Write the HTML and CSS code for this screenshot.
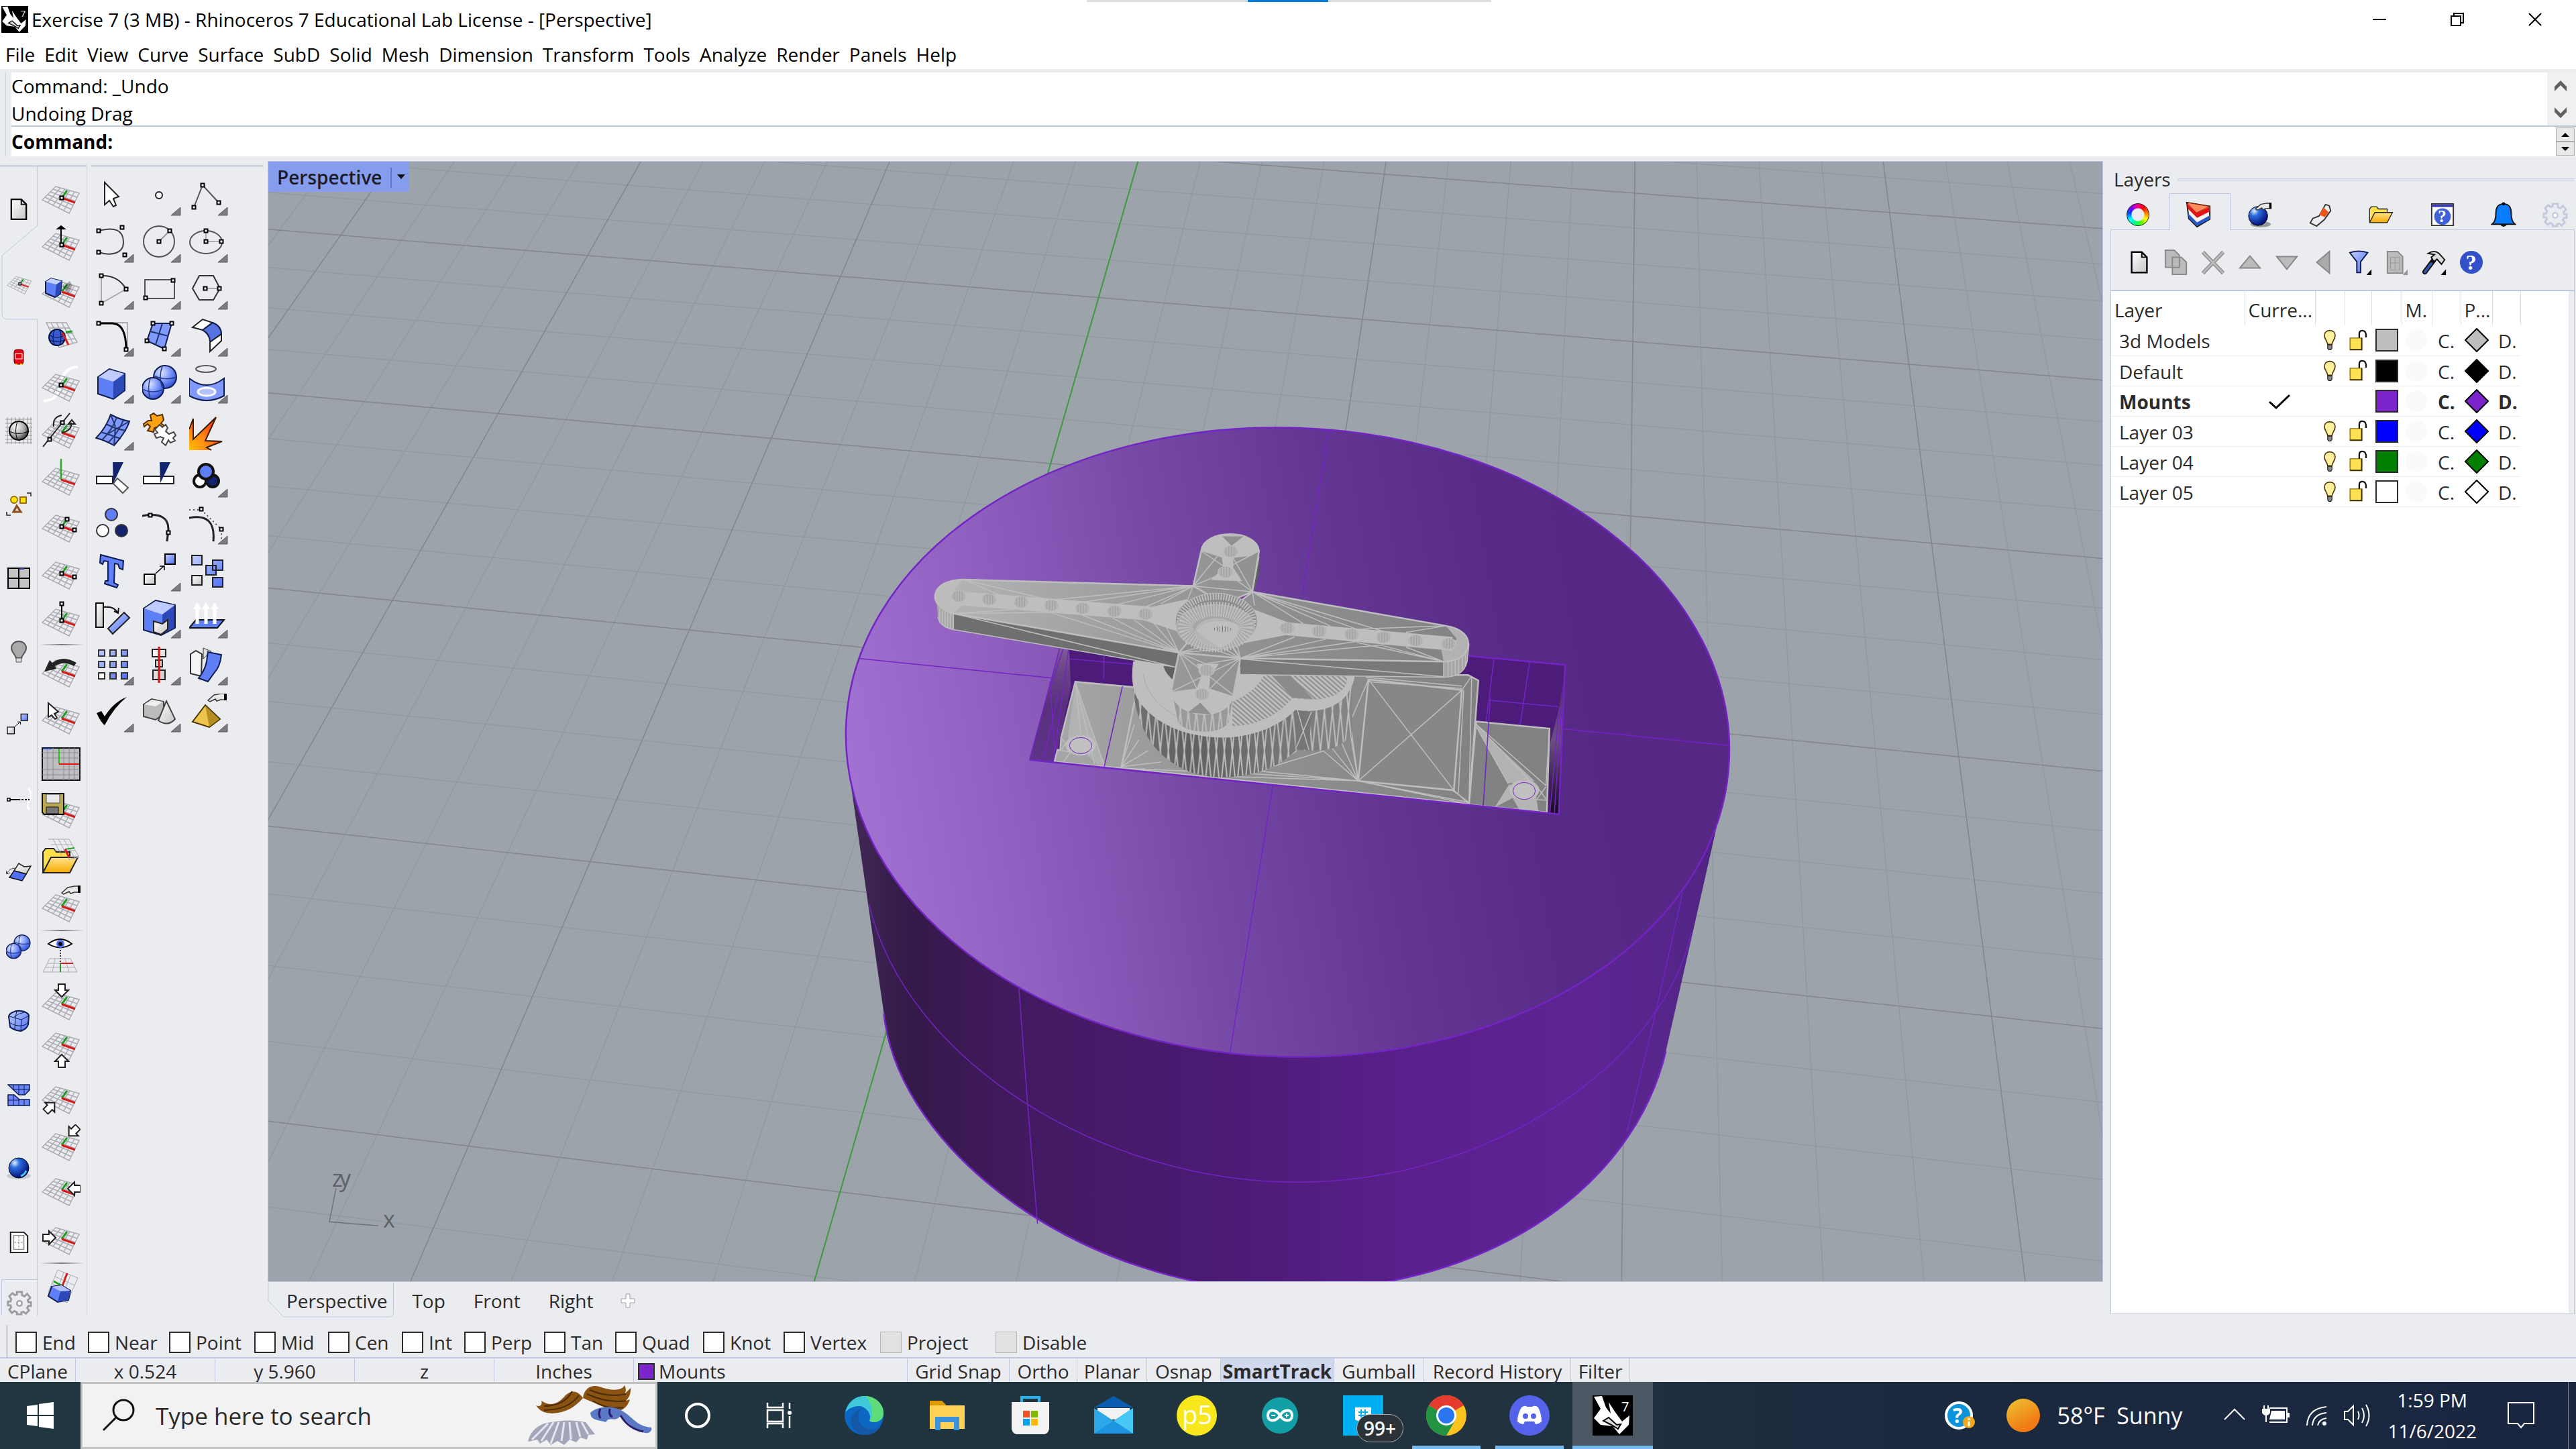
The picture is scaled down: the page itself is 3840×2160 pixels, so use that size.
FILE: index.html
```
<!DOCTYPE html>
<html lang="en">
<head>
<meta charset="UTF-8">
<meta name="viewport" content="width=device-width, initial-scale=1">
<title>Exercise 7 (3 MB) - Rhinoceros 7 Educational Lab License - [Perspective]</title>
<link rel="stylesheet" href="styles.css">
</head>
<body>

<!-- shared gradients and symbols -->
<svg class="defs" width="0" height="0" aria-hidden="true">
  <defs>
    <linearGradient id="blue" x1="0" y1="0" x2="1" y2="1"><stop offset="0" stop-color="#c3cfff"/><stop offset="1" stop-color="#4f70f2"/></linearGradient>
    <linearGradient id="grey" x1="0" y1="0" x2="1" y2="1"><stop offset="0" stop-color="#fff"/><stop offset="1" stop-color="#c4c4c4"/></linearGradient>
    <linearGradient id="gold" x1="0" y1="0" x2="0" y2="1"><stop offset="0" stop-color="#ffe58c"/><stop offset="1" stop-color="#f5a800"/></linearGradient>
    <radialGradient id="ball" cx=".35" cy=".3" r=".75"><stop offset="0" stop-color="#dfe6ff"/><stop offset=".5" stop-color="#7f9afc"/><stop offset="1" stop-color="#2a4bd0"/></radialGradient>
    <radialGradient id="greyball" cx=".35" cy=".3" r=".75"><stop offset="0" stop-color="#fff"/><stop offset=".6" stop-color="#aaa"/><stop offset="1" stop-color="#333"/></radialGradient>
    <radialGradient id="deepball" cx=".3" cy=".25" r=".8"><stop offset="0" stop-color="#e8f2ff"/><stop offset=".3" stop-color="#2d6fe0"/><stop offset="1" stop-color="#000a70"/></radialGradient>
    <radialGradient id="fire" cx="0" cy="1" r="1"><stop offset="0" stop-color="#ffc000"/><stop offset=".6" stop-color="#ff8418"/><stop offset="1" stop-color="#ff4a10"/></radialGradient>
  </defs>
  <symbol id="net" viewBox="0 0 58 58">
    <path d="M21 14 56 24 41 54 1 34ZM28 16 9 38M35 18 17 42M42 20 25 46M49 22 33 50M17 18 53 30M13 22 50 36M9 26 47 42M5 30 44 48" fill="none" stroke="#a9abb0" stroke-width="1.5"/>
  </symbol>
  <symbol id="cp" viewBox="0 0 58 58">
    <use href="#net"/>
    <path d="M30 31 38 20" stroke="#1f9e24" stroke-width="3"/><path d="M30 31 50 38" stroke="#d81a1a" stroke-width="3"/>
  </symbol>
  <symbol id="node" viewBox="0 0 8 8"><path d="M1.500 1.500h5v5h-5z" fill="#fff" stroke="#000" stroke-width="2"/></symbol>
  <symbol id="more" viewBox="0 0 58 58"><path d="M57 45V57H43Z" fill="#7b7c80" stroke="#5c5d60"/></symbol>
  <symbol id="hand" viewBox="0 0 30 14"><path d="M1 11 10 3 20 1H26V10H20L14 12 12 9 4 13Z" fill="#e8e8e8" stroke="#333" stroke-width="1.500"/><path d="M25 0h4v11h-4z"/></symbol>
  <symbol id="spheres" viewBox="0 0 58 58"><circle cx="34" cy="18" r="17" fill="url(#ball)" stroke="#101c50" stroke-width="2"/><circle cx="16" cy="35" r="16" fill="url(#ball)" stroke="#101c50" stroke-width="2"/><path d="M17 16q17 8 34 2M30 2q-6 16 0 32M0 36q16 8 32 0M12 20q-5 15 0 30" fill="none" stroke="#24388c" stroke-width="1.500"/></symbol>
  <symbol id="movesq" viewBox="0 0 58 58"><path d="M3 32h16v15H3z" fill="url(#grey)" stroke="#000" stroke-width="2"/><path d="M34 2h15v15H34z" fill="url(#blue)" stroke="#000" stroke-width="2"/><path d="M20 31 32 20M26 20h7v6" fill="none" stroke="#000" stroke-width="1.500"/></symbol>
  <symbol id="arrow" viewBox="0 0 24 22"><path d="M7 1H17V10H22L12 20 2 10H7Z" fill="#fff" stroke="#222" stroke-width="2"/></symbol>
  <symbol id="folder" viewBox="0 0 58 58"><path d="M2 50V20L6 15H18L22 20H42V28" fill="#ffe04a" stroke="#222" stroke-width="2"/><path d="M2 51 14 28H54L42 51Z" fill="url(#gold)" stroke="#222" stroke-width="2"/></symbol>
  <symbol id="page" viewBox="0 0 28 36"><path d="M2 2H18L26 10V34H2Z" fill="url(#grey)" stroke="#000" stroke-width="2.500"/><path d="M18 2V10H26" fill="none" stroke="#000" stroke-width="2"/></symbol>
  <symbol id="bulb" viewBox="0 0 24 40"><path d="M12 2C5 2 2 7 2 12c0 6 5 9 6 16h8c1-7 6-10 6-16C22 7 19 2 12 2Z" fill="#fff0a0" stroke="#4a3200" stroke-width="2"/><path d="M8 29h8v6l-2 3h-4l-2-3z" fill="#888" stroke="#222" stroke-width="1.500"/></symbol>
  <symbol id="lock" viewBox="0 0 32 36"><path d="M2 14H21V33H2Z" fill="#ffe254" stroke="#8a6f00" stroke-width="1.500"/><path d="M2 33H21V14" fill="none" stroke="#3f3200" stroke-width="2"/><path d="M17 14V7Q17 2 22 2T28 8V13" fill="none" stroke="#111" stroke-width="2.500"/></symbol>
  <symbol id="gear" viewBox="0 0 40 40"><path d="M16 3h8v5l4 2 4-4 5 6-4 4 1 3h4v6h-4l-2 3 3 4-5 5-4-3-3 1v3h-7v-3l-4-2-4 3-4-5 3-4-1-3H2v-6h4l1-4-3-4 5-5 4 3 3-1z" fill="none" stroke="currentColor" stroke-width="3"/><circle cx="20" cy="21" r="4" fill="#fff" stroke="currentColor" stroke-width="2.500"/></symbol>
  <symbol id="rhino" viewBox="0 0 60 60"><path d="M0 0h60v60H0z"/><path d="M2 2 14 1 20 18 27 27 24 10 33 24 44 39 55 30 54 44 40 58 30 46 12 44 2 34 12 20Z" fill="#fff"/><path d="M16 38 24 33 36 44 42 43 38 50 28 44Z" stroke="#000" stroke-width="2" fill="#ddd"/><text x="43" y="24" fill="#fff" font-size="20">7</text></symbol>
</svg>

<header class="titlebar">
  <svg class="app-icon"><use href="#rhino"/></svg>
  <h1>Exercise 7 (3 MB) - Rhinoceros 7 Educational Lab License - [Perspective]</h1>
  <div class="pull-tab"></div>
  <div class="window-buttons">
    <button aria-label="Minimize"><svg viewBox="0 0 20 20"><path d="M0 10H20"/></svg></button>
    <button aria-label="Restore"><svg viewBox="0 0 20 20"><path d="M1 5H15V19H1ZM5 5V1H19V15H15"/></svg></button>
    <button aria-label="Close"><svg viewBox="0 0 20 20"><path d="M1 1 19 19M19 1 1 19"/></svg></button>
  </div>
</header>

<nav class="menubar">
  <a href="#">File</a><a href="#">Edit</a><a href="#">View</a><a href="#">Curve</a><a href="#">Surface</a><a href="#">SubD</a><a href="#">Solid</a><a href="#">Mesh</a><a href="#">Dimension</a><a href="#">Transform</a><a href="#">Tools</a><a href="#">Analyze</a><a href="#">Render</a><a href="#">Panels</a><a href="#">Help</a>
</nav>

<section class="command">
  <div class="history">
    <div class="history-text"><p>Command: _Undo</p><p>Undoing Drag</p></div>
    <div class="scroll">
      <button aria-label="Scroll up"><svg viewBox="0 0 18 16"><path d="M0 16V9L9 0 18 9V16L9 7Z"/></svg></button>
      <button aria-label="Scroll down"><svg viewBox="0 0 18 16"><path d="M0 0V7L9 16 18 7V0L9 9Z"/></svg></button>
    </div>
  </div>
  <div class="prompt">
    <label for="cmd">Command:</label>
    <input id="cmd" type="text">
    <div class="spin">
      <button aria-label="Previous"><svg viewBox="0 0 12 6"><path d="M0 6 6 0 12 6Z"/></svg></button>
      <button aria-label="Next"><svg viewBox="0 0 12 6"><path d="M0 0 6 6 12 0Z"/></svg></button>
    </div>
  </div>
</section>

<main class="workspace">
  <div class="toolbars">
    <nav class="tool-tabs">
      <button aria-label="Standard"><svg class="i28" viewBox="0 0 28 36"><use href="#page"/></svg></button>
      <button class="current" aria-label="CPlanes"><svg class="outline" viewBox="0 0 54 141"><path d="M54 0 0 45V131Q0 141 10 141H54Z" fill="#ebecf0"/><path d="M53 0V1L1 45V131Q1 140 10 140H54" fill="none" stroke="#bfc7de"/></svg><svg class="i38" viewBox="0 0 58 58"><use href="#cp"/><use href="#node" x="26" y="27" width="8" height="8"/></svg></button>
      <button aria-label="Set View"><svg class="i24" viewBox="0 0 24 24"><rect x="5" y="1" width="14" height="22" rx="4" fill="#e30613" stroke="#700"/><path d="M7 7h10M7 15h10M7 7v8M17 7v8" stroke="#fff" fill="none"/><path d="M7 23h3M14 23h3" stroke="#fd0" stroke-width="2"/></svg></button>
      <button aria-label="Display"><svg class="i40" viewBox="0 0 40 40"><path d="M3 0V40M9 0V40M15 0V40M21 0V40M27 0V40M33 0V40M38 0V40M0 3H40M0 9H40M0 15H40M0 21H40M0 27H40M0 33H40M0 38H40" stroke="#999"/><circle cx="20" cy="20" r="14" fill="url(#greyball)" stroke="#000" stroke-width="2"/><path d="M6 21q14 7 28 0M18 6q-5 14 0 28" fill="none" stroke="#000"/></svg></button>
      <button aria-label="Select"><svg class="i38" viewBox="0 0 38 38"><circle cx="12" cy="12" r="5" fill="#ffe800" stroke="#a86a00" stroke-width="2"/><path d="M21 8h9v9h-9z" fill="#ffe800" stroke="#a86a00" stroke-width="2"/><path d="M16 21 22 30H11Z" fill="none" stroke="#8a4a1a" stroke-width="3"/><path d="M31 2h6v5M1 30v5h6" fill="none" stroke="#222" stroke-width="1.500"/></svg></button>
      <button aria-label="Viewport Layout"><svg class="i34" viewBox="0 0 34 32"><path d="M1 1H33V31H1ZM17 1V31M1 16H33" fill="#c4c4c4" stroke="#000" stroke-width="2"/><path d="M18 2h7" stroke="#1a3ab0" stroke-width="2"/></svg></button>
      <button aria-label="Visibility"><svg class="i34" viewBox="0 0 34 34"><path d="M17 1C10 1 6 6 6 11c0 7 6 9 7 15h8c1-6 7-8 7-15C28 6 24 1 17 1Z" fill="#aaa" stroke="#555" stroke-width="2"/><path d="M13 26h8v6h-8z" fill="#ddd" stroke="#555"/></svg></button>
      <button aria-label="Transform"><svg class="i38" viewBox="0 0 58 58"><use href="#movesq"/></svg></button>
      <button aria-label="Curve Tools"><svg class="i38" viewBox="0 0 38 38"><path d="M33 2q8 10 2 18t0 14" fill="none" stroke="#fff" stroke-width="3"/><path d="M6 19H18" stroke="#000" stroke-width="2"/><path d="M18 19H35" stroke="#000" stroke-width="2" stroke-dasharray="3 2"/><path d="M2 17h4v4H2z" fill="#fff" stroke="#000" stroke-width="1.500"/></svg></button>
      <button aria-label="Surface Tools"><svg class="i38" viewBox="0 0 38 38"><path d="M12 15 19 4 27 9 37 8 30 20Z" fill="url(#grey)" stroke="#222" stroke-width="1.500"/><path d="M12 15 30 20 24 30 5 25Z" fill="#4f70f2" stroke="#111" stroke-width="1.500"/><path d="M13 11Q4 12 1 20M0 15l1 5 5-2" fill="none" stroke="#333"/></svg></button>
      <button aria-label="Solid Tools"><svg class="i38" viewBox="0 0 54 54"><use href="#spheres" width="58" height="58"/></svg></button>
      <button aria-label="SubD Tools"><svg class="i34" viewBox="0 0 34 34"><path d="M8 4Q15 0 25 3 32 6 32 9L31 22Q29 29 20 32 10 31 4 26L2 10Q3 6 8 4Z" fill="url(#blue)" stroke="#0c1c50" stroke-width="2"/><path d="M3 10 21 15 32 9M21 15 20 31M12 12 11 30M3 19Q12 25 21 24T31 17M14 2 12 12M25 4Q16 6 10 11" fill="none" stroke="#0c1c50"/></svg></button>
      <button aria-label="Mesh Tools"><svg class="i34" viewBox="0 0 34 34"><path d="M1 2H33V10L26 17H17Z" fill="#6a86fa" stroke="#0c1c50" stroke-width="1.500"/><path d="M1 17H10L18 24H33V33H1Z" fill="#6a86fa" stroke="#0c1c50" stroke-width="1.500"/><path d="M9 2V9M17 2V17M25 2V17M8 9H33M9 17V33M17 24V33M25 24V33M1 25H18" stroke="#0c1c50"/></svg></button>
      <button aria-label="Render Tools"><svg class="i38" viewBox="0 0 38 38"><ellipse cx="19" cy="30" rx="18" ry="5" fill="#c9cad0"/><circle cx="19" cy="18" r="15" fill="url(#deepball)" stroke="#001"/><path d="M22 30q6-2 8-8" stroke="#46c2f4" stroke-width="3" fill="none"/></svg></button>
      <button aria-label="Drafting"><svg class="i34" viewBox="0 0 34 36"><path d="M4 2H25L31 8V34H4Z" fill="#fff" stroke="#111" stroke-width="2"/><path d="M9 7H25V29H9Z" fill="none" stroke="#888" stroke-width="1.500"/><path d="M17 8V29M10 18H25" stroke="#777" stroke-dasharray="3 2"/></svg></button>
      <button class="options" aria-label="Options"><svg class="i38" viewBox="0 0 40 40"><use href="#gear"/></svg></button>
    </nav>

    <div class="strip">
      <button aria-label="Set CPlane origin"><svg viewBox="0 0 58 58"><use href="#cp"/><use href="#node" x="26" y="27" width="8" height="8"/></svg></button>
      <button aria-label="Set CPlane elevation"><svg viewBox="0 0 58 58"><use href="#cp"/><path d="M29 29V6M24 7 29 3 34 7Z" stroke="#000" stroke-width="2"/><use href="#node" x="26" y="27" width="8" height="8"/></svg></button>
      <button aria-label="CPlane to object"><svg viewBox="0 0 58 58"><use href="#cp"/><path d="M32 24 42 15 46 22 40 34Z" opacity=".3"/><path d="M6 16 14 11 30 15 28 34 20 39 6 33Z" fill="#5f7ff7" stroke="#101c50" stroke-width="2"/><path d="M6 16 14 11 30 15 22 20Z" fill="#c3cfff"/><path d="M22 20 30 15 28 34 20 39Z" fill="#2d49b8"/></svg></button>
      <button aria-label="CPlane to surface"><svg viewBox="0 0 58 58"><path d="M7 7H37L53 36 26 44ZM14 7 33 42M22 7 40 40M30 7 47 38M10 15H42M14 24 46 23M19 33 50 31" fill="none" stroke="#a9abb0" stroke-width="1.500"/><circle cx="23" cy="29" r="12" fill="#3a5ad0" stroke="#001040" stroke-width="2"/><path d="M12 26q11 6 22 0M12 33q11 5 22 0M19 18q-4 11 0 22M27 18q4 11 0 22" fill="none" stroke="#001040"/><path d="M36 21 46 20" stroke="#1f9e24" stroke-width="3"/><path d="M31 22 40 40" stroke="#d81a1a" stroke-width="3"/></svg></button>
      <button aria-label="CPlane perpendicular to curve"><svg viewBox="0 0 58 58"><path d="M3 54Q26 52 29 28T54 3" fill="none" stroke="#fff" stroke-width="4"/><use href="#cp"/><use href="#node" x="25" y="26" width="8" height="8"/></svg></button>
      <button aria-label="Rotate CPlane"><svg viewBox="0 0 58 58"><use href="#cp"/><path d="M2 52 42 2M30 5Q16 8 18 22M44 16Q46 28 30 31M40 18 45 12 50 18Z" fill="none" stroke="#222" stroke-width="2"/><use href="#node" x="27" y="12" width="8" height="8"/><use href="#node" x="8" y="37" width="8" height="8"/></svg></button>
      <button aria-label="Vertical CPlane"><svg viewBox="0 0 58 58"><use href="#net"/><path d="M29 31V0" stroke="#2aa82a" stroke-width="2.500"/><path d="M29 31 50 38" stroke="#d81a1a" stroke-width="3"/></svg></button>
      <button aria-label="CPlane 3 points"><svg viewBox="0 0 58 58"><use href="#cp"/><use href="#node" x="26" y="27" width="8" height="8"/><use href="#node" x="34" y="16" width="8" height="8"/><use href="#node" x="45" y="32" width="8" height="8"/></svg></button>
      <button aria-label="CPlane X axis"><svg viewBox="0 0 58 58"><use href="#cp"/><use href="#node" x="26" y="27" width="8" height="8"/><use href="#node" x="45" y="32" width="8" height="8"/></svg></button>
      <button aria-label="CPlane Z axis"><svg viewBox="0 0 58 58"><use href="#cp"/><path d="M30 30V8" stroke="#000" stroke-width="2"/><use href="#node" x="26" y="27" width="8" height="8"/><use href="#node" x="26" y="2" width="8" height="8"/></svg></button>
      <hr>
      <button aria-label="Previous CPlane"><svg viewBox="0 0 58 58"><use href="#cp"/><path d="M4 31 12 14 16 18Q32 6 52 18L48 23Q34 14 20 23L22 27Z" fill="#222"/></svg></button>
      <button aria-label="Pick CPlane"><svg viewBox="0 0 58 58"><use href="#cp"/><path d="M10 8V29L15 26 20 32 23 30 19 24 25 21Z" fill="#fff" stroke="#222" stroke-width="2"/></svg></button>
      <button aria-label="CPlane in view"><svg viewBox="0 0 58 58"><path d="M1 5H57V53H1Z" fill="#bdbec0" stroke="#111" stroke-width="2"/><path d="M9 5V53M17 5V53M33 5V53M41 5V53M49 5V53M1 12H57M1 20H57M1 37H57M1 45H57" stroke="#8b8d90"/><path d="M2 6H15" stroke="#1a3ab0" stroke-width="2"/><path d="M26 6V29" stroke="#2ac410" stroke-width="2"/><path d="M26 29H56" stroke="#f01010" stroke-width="2"/></svg></button>
      <button aria-label="Save CPlane"><svg viewBox="0 0 58 58"><use href="#cp"/><path d="M1 3H33V34H4L1 31Z" fill="#b8a952" stroke="#111" stroke-width="2"/><path d="M7 4h20v13H7z" fill="#e9e9e9" stroke="#555"/><path d="M7 23h18v10H7z" fill="#777" stroke="#111"/></svg></button>
      <button aria-label="Read CPlane"><svg viewBox="0 0 58 58"><use href="#folder"/><path d="M10 1H41L56 28 40 31M17 1 30 25M25 1 42 32M33 1 50 30M14 9H46M19 18H50M38 27H55" fill="none" stroke="#a9abb0"/><path d="M35 16 49 14" stroke="#1f9e24" stroke-width="2"/><path d="M35 16 41 28" stroke="#d81a1a" stroke-width="3"/></svg></button>
      <button aria-label="Named CPlanes"><svg viewBox="0 0 58 58"><use href="#cp"/><use href="#hand" x="29" y="0" width="30" height="14"/></svg></button>
      <hr>
      <button aria-label="CPlane to view"><svg viewBox="0 0 58 58"><path d="M10 11Q28-3 45 11 28 22 10 11Z" fill="#fff" stroke="#000" stroke-width="2"/><circle cx="28" cy="11" r="6" fill="#4f70f2"/><circle cx="28" cy="11" r="3"/><path d="M28 20V40" stroke="#333" stroke-width="2" stroke-dasharray="2 2"/><path d="M12 33H43L53 53H2ZM9 40H47M6 46H50M20 33 16 53M35 33 41 53" fill="none" stroke="#a9abb0"/><path d="M28 40H47" stroke="#d81a1a" stroke-width="2"/><path d="M28 40V53" stroke="#1f9e24" stroke-width="2"/></svg></button>
      <button aria-label="World Top"><svg viewBox="0 0 58 58"><use href="#cp"/><use href="#arrow" x="18" y="0" width="24" height="22"/></svg></button>
      <button aria-label="World Bottom"><svg viewBox="0 0 58 58"><use href="#cp" y="-10"/><use href="#arrow" x="18" y="34" width="24" height="22" transform="rotate(180 30 45)"/></svg></button>
      <button aria-label="World Front"><svg viewBox="0 0 58 58"><use href="#cp"/><use href="#arrow" x="1" y="33" width="24" height="22" transform="rotate(225 13 44)"/></svg></button>
      <button aria-label="World Back"><svg viewBox="0 0 58 58"><use href="#cp"/><use href="#arrow" x="35" y="0" width="24" height="22" transform="rotate(45 47 11)"/></svg></button>
      <button aria-label="World Right"><svg viewBox="0 0 58 58"><use href="#cp" y="-3"/><use href="#arrow" x="36" y="15" width="24" height="22" transform="rotate(90 48 26)"/></svg></button>
      <button aria-label="World Left"><svg viewBox="0 0 58 58"><use href="#cp"/><use href="#arrow" x="0" y="18" width="24" height="22" transform="rotate(270 12 29)"/></svg></button>
      <hr>
      <button aria-label="Gumball CPlane"><svg viewBox="0 0 58 58"><path d="M24 1 54 13 38 50 10 34ZM33 5 20 40M43 9 29 45M20 11 49 24M15 21 44 37" fill="none" stroke="#a9abb0"/><path d="M31 25 38 6" stroke="#d81a1a" stroke-width="3"/><path d="M31 25 18 18" stroke="#1f9e24" stroke-width="3"/><path d="M15 26 30 24 43 32 40 46 24 49 10 40Z" fill="#5f7ff7" stroke="#101c50" stroke-width="2"/><path d="M28 33 43 32 40 46 24 49Z" fill="#2d49b8"/><path d="M15 26 30 24 43 32 28 33Z" fill="#b3c2ff"/></svg></button>
    </div>

    <div class="palette">
      <button aria-label="Pointer"><svg viewBox="0 0 58 58"><path d="M14 8V41L21 35 27 44 31 42 27 32 35 29Z" fill="#fff" stroke="#222" stroke-width="2"/></svg></button>
      <button aria-label="Point"><svg viewBox="0 0 58 58"><circle cx="25" cy="27" r="5" fill="#fff" stroke="#222" stroke-width="2"/><use href="#more"/></svg></button>
      <button aria-label="Polyline"><svg viewBox="0 0 58 58"><path d="M7 45 20 12 44 38" fill="none" stroke="#555" stroke-width="2"/><use href="#node" x="16" y="8" width="8" height="8"/><use href="#node" x="3" y="41" width="8" height="8"/><use href="#node" x="40" y="34" width="8" height="8"/><use href="#more"/></svg></button>

      <button aria-label="Curve"><svg viewBox="0 0 58 58"><path d="M5 10C28 4 42 8 42 27S20 47 5 42" fill="none" stroke="#444" stroke-width="2"/><use href="#more"/><use href="#node" x="1" y="6" width="8" height="8"/><use href="#node" x="36" y="1" width="8" height="8"/><use href="#node" x="1" y="38" width="8" height="8"/><use href="#node" x="40" y="42" width="8" height="8"/></svg></button>
      <button aria-label="Circle"><svg viewBox="0 0 58 58"><circle cx="25" cy="26" r="23" fill="none" stroke="#555" stroke-width="2"/><path d="M25 26 41 10" stroke="#999" stroke-width="2"/><use href="#node" x="21" y="22" width="8" height="8"/><use href="#node" x="37" y="6" width="8" height="8"/><use href="#more"/></svg></button>
      <button aria-label="Ellipse"><svg viewBox="0 0 58 58"><ellipse cx="25" cy="27" rx="24" ry="17" fill="none" stroke="#555" stroke-width="2"/><path d="M25 10V26H48" fill="none" stroke="#999" stroke-width="1.500"/><use href="#node" x="21" y="6" width="8" height="8"/><use href="#node" x="21" y="22" width="8" height="8"/><use href="#node" x="44" y="22" width="8" height="8"/><use href="#more"/></svg></button>

      <button aria-label="Arc"><svg viewBox="0 0 58 58"><path d="M9 7V48L46 27" fill="none" stroke="#aaa" stroke-width="2"/><path d="M9 7Q34 6 46 27" fill="none" stroke="#333" stroke-width="2"/><use href="#node" x="5" y="3" width="8" height="8"/><use href="#node" x="42" y="23" width="8" height="8"/><use href="#node" x="5" y="44" width="8" height="8"/><use href="#more"/></svg></button>
      <button aria-label="Rectangle"><svg viewBox="0 0 58 58"><path d="M4 13H48V41H4Z" fill="none" stroke="#222" stroke-width="1.500"/><use href="#node" x="42" y="10" width="8" height="8"/><use href="#node" x="1" y="36" width="8" height="8"/><use href="#more"/></svg></button>
      <button aria-label="Polygon"><svg viewBox="0 0 58 58"><path d="M5 26 15 7H36L46 26 36 43H15Z" fill="none" stroke="#333" stroke-width="2"/><path d="M24 26H45" stroke="#999" stroke-width="1.500"/><use href="#node" x="20" y="22" width="8" height="8"/><use href="#node" x="41" y="22" width="8" height="8"/><use href="#more"/></svg></button>

      <button aria-label="Fillet"><svg viewBox="0 0 58 58"><path d="M5 7H48V47" fill="none" stroke="#999" stroke-width="1.500"/><path d="M5 8H25Q46 8 46 47" fill="none" stroke="#000" stroke-width="3"/><use href="#more"/><use href="#node" x="1" y="4" width="8" height="8"/><use href="#node" x="42" y="43" width="8" height="8"/></svg></button>
      <button aria-label="Surface"><svg viewBox="0 0 58 58"><path d="M16 8H44L33 46 7 34Z" fill="#7f9afc" stroke="#101c50" stroke-width="2"/><path d="M30 8 20 40M12 20 39 27" stroke="#22336e" stroke-width="2"/><use href="#node" x="12" y="4" width="8" height="8"/><use href="#node" x="40" y="4" width="8" height="8"/><use href="#node" x="29" y="42" width="8" height="8"/><use href="#node" x="3" y="30" width="8" height="8"/><use href="#more"/></svg></button>
      <button aria-label="Blend surface"><svg viewBox="0 0 58 58"><path d="M5 14 20 2 35 7 20 18Z" fill="#fff" stroke="#222" stroke-width="2"/><path d="M20 18 35 7Q48 12 48 24L31 36Q31 24 20 18Z" fill="#5673e0" stroke="#101c50" stroke-width="2"/><path d="M31 36 48 24V34L31 50Z" fill="#fff" stroke="#222" stroke-width="2"/><use href="#more"/></svg></button>

      <button aria-label="Box"><svg viewBox="0 0 58 58"><path d="M4 18 21 6 44 13V38L27 51 4 43Z" fill="#5f7ff7" stroke="#101c50" stroke-width="2"/><path d="M5 18 21 7 43 13 27 25Z" fill="#c0ccff"/><path d="M27 25 43 14V38L27 50Z" fill="#2d49b8"/><use href="#more"/></svg></button>
      <button aria-label="Sphere"><svg viewBox="0 0 58 58"><use href="#spheres"/><use href="#more"/></svg></button>
      <button aria-label="Project"><svg viewBox="0 0 58 58"><ellipse cx="25" cy="6" rx="15" ry="5" fill="none" stroke="#555" stroke-width="2"/><path d="M0 20Q26 40 52 20V46Q26 60 0 46Z" fill="#7f9afc" stroke="#101c50" stroke-width="2"/><ellipse cx="26" cy="40" rx="13" ry="6" fill="#b3c2ff" stroke="#fff" stroke-width="3"/><use href="#more"/></svg></button>

      <button aria-label="Mesh"><svg viewBox="0 0 58 58"><path d="M23 4Q38 12 51 14 46 30 28 50 14 42 1 39 16 24 23 4Z" fill="#7f9afc" stroke="#101c50" stroke-width="2"/><path d="M32 8Q26 26 10 42M42 12Q34 32 19 46M16 18Q32 26 46 28M8 30Q22 34 38 40M23 4 30 22M51 14 20 32M30 24 28 50" fill="none" stroke="#22336e" stroke-width="2"/><use href="#more"/></svg></button>
      <button aria-label="Explode"><svg viewBox="0 0 58 58"><path d="M2 18 9 13 14 13 12 5 17 2 22 6 30 4 32 12 28 17 32 20 30 26 24 22 18 24 17 30 8 28 12 22 8 18 3 22Z" fill="#ffa010" stroke="#553000" stroke-width="2"/><path d="M19 26 26 19 30 23 35 19 38 24 35 29 40 33 47 30 50 35 46 39 49 43 42 46 39 42 35 50 29 45 32 39 27 37 21 39 18 33 23 31Z" fill="#fff" stroke="#444" stroke-width="2"/></svg></button>
      <button aria-label="Join"><svg viewBox="0 0 58 58"><path d="M0 28 6 10V41L40 8 24 43 49 44 26 53 33 57H0Z" fill="url(#fire)"/><path d="M0 26 6 10V41L40 8 24 43 49 44 26 53 33 57" fill="none" stroke="#3a1a00" stroke-width="2"/></svg></button>

      <button aria-label="Trim"><svg viewBox="0 0 58 58"><path d="M2 26H26V37H2Z" fill="#fff" stroke="#222" stroke-width="2"/><path d="M33 29 49 43 41 51 27 37Z" fill="#fff" stroke="#555" stroke-width="2"/><path d="M26 5H42L27 36Z" fill="#12246e"/></svg></button>
      <button aria-label="Split"><svg viewBox="0 0 58 58"><path d="M2 26H47V37H2Z" fill="#fff" stroke="#222" stroke-width="2"/><path d="M26 5H42L27 36Z" fill="#12246e"/></svg></button>
      <button aria-label="Group"><svg viewBox="0 0 58 58"><circle cx="16" cy="33" r="9" fill="#fff" stroke="#111" stroke-width="4"/><circle cx="35" cy="33" r="9" fill="#12246e" stroke="#111" stroke-width="4"/><circle cx="25" cy="19" r="11" fill="#5f7ff7" stroke="#111" stroke-width="4"/><use href="#more"/></svg></button>

      <button aria-label="Ungroup"><svg viewBox="0 0 58 58"><circle cx="24" cy="13" r="9" fill="#5f7ff7" stroke="#333" stroke-width="2"/><circle cx="11" cy="37" r="9" fill="#fff" stroke="#333" stroke-width="2"/><circle cx="39" cy="37" r="9" fill="#12246e" stroke="#333" stroke-width="2"/></svg></button>
      <button aria-label="Edit points"><svg viewBox="0 0 58 58"><path d="M0 15Q40 8 39 36L37 53" fill="none" stroke="#222" stroke-width="3"/><use href="#node" x="8" y="10" width="8" height="8"/><use href="#node" x="35" y="36" width="8" height="8"/></svg></button>
      <button aria-label="Control points"><svg viewBox="0 0 58 58"><path d="M0 6H18L48 35V52" fill="none" stroke="#555" stroke-width="2" stroke-dasharray="2 4"/><path d="M0 18Q40 10 36 53" fill="none" stroke="#222" stroke-width="3"/><use href="#more"/><use href="#node" x="14" y="1" width="8" height="8"/><use href="#node" x="44" y="31" width="8" height="8"/></svg></button>

      <button aria-label="Text"><svg viewBox="0 0 58 58"><path d="M8 3 42 12 41 25 36 23 34 17 29 16 28 45 34 48 32 52 14 46 15 42 19 42V13L13 12 11 17 7 15Z" fill="#5f7ff7" stroke="#101c50" stroke-width="2"/></svg></button>
      <button aria-label="Move"><svg viewBox="0 0 58 58"><use href="#movesq"/><use href="#more"/></svg></button>
      <button aria-label="Copy"><svg viewBox="0 0 58 58"><path d="M4 4h15v14H4zM35 11h15v15H35zM25 19h15v14H25zM35 37h15v14H35z" fill="url(#blue)" stroke="#222" stroke-width="2"/><path d="M4 34h15v14H4z" fill="url(#grey)" stroke="#222" stroke-width="2"/></svg></button>

      <button aria-label="Rotate"><svg viewBox="0 0 58 58"><path d="M1 5H12V41H1Z" fill="url(#grey)" stroke="#111" stroke-width="2"/><path d="M43 19 51 27 26 51 19 43Z" fill="url(#blue)" stroke="#222" stroke-width="2"/><path d="M13 11Q28 9 34 20M28 17 34 20 35 12" fill="none" stroke="#111" stroke-width="2"/></svg></button>
      <button aria-label="Scale"><svg viewBox="0 0 58 58"><path d="M2 13 20 1 49 8V42L28 53 2 45Z" fill="#5f7ff7" stroke="#101c50" stroke-width="2"/><path d="M3 13 20 2 48 8 30 22Z" fill="#c0ccff"/><path d="M30 22 48 9V42L30 50Z" fill="#2d49b8"/><path d="M17 32 30 36 38 30V44L28 52 17 48Z" fill="url(#grey)" stroke="#222" stroke-width="2"/><use href="#more"/></svg></button>
      <button aria-label="Analyze direction"><svg viewBox="0 0 58 58"><path d="M10 30H52L42 42H0Z" fill="#5f7ff7" stroke="#111" stroke-width="2"/><path d="M12 36V8M25 36V8M38 36V8" stroke="#fff" stroke-width="5"/><path d="M6 14 12 4 18 14ZM19 14 25 4 31 14ZM32 14 38 4 44 14Z" fill="#fff"/><use href="#more"/></svg></button>

      <button aria-label="Array"><svg viewBox="0 0 58 58"><path d="M5 5h9v9H5zM22 5h9v9h-9zM39 5h9v9h-9zM5 22h9v9H5zM22 22h9v9h-9zM39 22h9v9h-9zM22 39h9v9h-9zM39 39h9v9h-9z" fill="url(#blue)" stroke="#333" stroke-width="2"/><path d="M5 39h9v9H5z" fill="#fff" stroke="#333" stroke-width="2"/><use href="#more"/></svg></button>
      <button aria-label="Align"><svg viewBox="0 0 58 58"><path d="M15 4h20v11H15zM20 20h10v10H20zM16 35h18v14H16z" fill="url(#grey)" stroke="#222" stroke-width="2"/><path d="M25 0V54" stroke="#e01010" stroke-width="3"/><use href="#more"/></svg></button>
      <button aria-label="Flow"><svg viewBox="0 0 58 58"><path d="M2 11 10 6 19 11 18 44 2 40Z" fill="#f4f4f4" stroke="#333" stroke-width="2"/><path d="M21 2 33 7 21 18Z" fill="#ddd" stroke="#333"/><path d="M28 8 48 12Q46 30 38 38L28 52 14 47Q24 34 26 22Z" fill="#5f7ff7" stroke="#101c50" stroke-width="2"/><use href="#more"/></svg></button>

      <button aria-label="Check"><svg viewBox="0 0 58 58"><path d="M2 29 9 26 14 34Q28 12 47 5 28 20 14 47 9 44 2 29Z"/><use href="#more"/></svg></button>
      <button aria-label="Hide"><svg viewBox="0 0 58 58"><path d="M2 16 14 8 32 12V30L20 39 2 34Z" fill="#bbb" stroke="#444" stroke-width="2"/><path d="M3 16 14 9 31 12 20 19Z" fill="#eee"/><path d="M36 11 49 38Q38 50 24 40Z" fill="url(#grey)" stroke="#444" stroke-width="2"/><use href="#more"/></svg></button>
      <button aria-label="Properties"><svg viewBox="0 0 58 58"><path d="M24 17 5 42 30 50 46 38Z" fill="#eec54c" stroke="#4a3400" stroke-width="2"/><path d="M24 18 30 49 45 38Z" fill="#b58e20"/><use href="#hand" x="27" y="-1" width="30" height="14"/><use href="#more"/></svg></button>
    </div>
  </div>

  <section class="view">
    <div class="viewport">
      <svg class="scene" viewBox="400 241 2735 1670" preserveAspectRatio="xMidYMid slice">
        <defs>
          <linearGradient id="top" gradientUnits="userSpaceOnUse" x1="1270" y1="1230" x2="2500" y2="980">
            <stop offset="0" stop-color="#a272d3"/><stop offset=".16" stop-color="#9363c3"/><stop offset=".4" stop-color="#784aa7"/><stop offset=".62" stop-color="#643694"/><stop offset=".82" stop-color="#582a88"/><stop offset="1" stop-color="#562784"/>
          </linearGradient>
          <linearGradient id="side" gradientUnits="userSpaceOnUse" x1="1262" y1="0" x2="2575" y2="0">
            <stop offset="0" stop-color="#432b57"/><stop offset=".07" stop-color="#341949"/><stop offset=".2" stop-color="#431a60"/><stop offset=".45" stop-color="#4c1b77"/><stop offset=".62" stop-color="#591f8a"/><stop offset=".82" stop-color="#5f2494"/><stop offset=".93" stop-color="#56268a"/><stop offset="1" stop-color="#4f2380"/>
          </linearGradient>
          <linearGradient id="metal" gradientUnits="userSpaceOnUse" x1="50" y1="0" x2="1430" y2="0"><stop offset="0" stop-color="#b4b5b6"/><stop offset=".45" stop-color="#929496"/><stop offset="1" stop-color="#7b7d7f"/></linearGradient>
          <linearGradient id="drumshade" x1="0" y1="0" x2="1" y2="0"><stop offset="0" stop-color="#707172"/><stop offset=".25" stop-color="#5e5f5f"/><stop offset="1" stop-color="#858686"/></linearGradient>
          <linearGradient id="wall" x1="0" y1="0" x2="0" y2="1"><stop offset="0" stop-color="#7c5d92"/><stop offset=".2" stop-color="#6a4488"/><stop offset=".5" stop-color="#58307c"/><stop offset="1" stop-color="#5d3488"/></linearGradient>
          <linearGradient id="darkwall" x1="0" y1="0" x2="0" y2="1"><stop offset="0" stop-color="#4a1a70"/><stop offset=".5" stop-color="#6a5080"/><stop offset="1" stop-color="#180822"/></linearGradient>
          <pattern id="ribs" width="18" height="360" patternUnits="userSpaceOnUse"><path d="M0 0 9 180 0 360M18 0 9 180 18 360" fill="none" stroke="#bebebe" stroke-width="3"/></pattern>
          <pattern id="slant" width="12" height="20" patternUnits="userSpaceOnUse" patternTransform="skewX(30)"><path d="M4 0V20" stroke="#bebebe" stroke-width="7"/></pattern>
          <g id="hole"><ellipse rx="17" ry="26" fill="#b2b2b2" stroke="#bebebe" stroke-width="2"/><path d="M-10-18V16M-4-24V22M2-25V23M8-20V20" stroke="#8c8c8c" stroke-width="1"/></g>
        </defs>

        <!-- construction plane grid -->
        <path class="grid-minor" d="M401 240-893 1911M493 240-743 1911M678 240-442 1911M771 240-291 1911M864 240-141 1911M1049 240 160 1911M1141 240 311 1911M1234 240 461 1911M1419 240 762 1911M1512 240 913 1911M1604 240 1063 1911M1790 240 1364 1911M1882 240 1515 1911M1975 240 1665 1911M2160 240 1966 1911M2253 240 2117 1911M2345 240 2267 1911M2530 240 2568 1911M2623 240 2719 1911M2716 240 2869 1911M2901 240 3170 1911M2993 240 3321 1911M3086 240 3471 1911M400 87 3135 289M400 183 3135 394M400 234 3135 449M400 287 3135 507M400 399 3135 629M400 459 3135 694M400 521 3135 762M400 654 3135 907M400 725 3135 984M400 799 3135 1065M400 959 3135 1239M400 1046 3135 1332M400 1136 3135 1431M400 1333 3135 1644M400 1440 3135 1759M400 1553 3135 1881M400 1800 3135 2148"/>
        <path class="grid-major" d="M586 240-592 1911M956 240 10 1911M1327 240 612 1911M2067 240 1816 1911M2438 240 2418 1911M2808 240 3020 1911M400 134 3135 341M400 342 3135 567M400 586 3135 833M400 877 3135 1150M400 1232 3135 1534M400 1672 3135 2011"/>
        <path d="M1697 240 1214 1911" stroke="#3f9a3f" stroke-width="2"/>

        <!-- mount body -->
        <g fill="url(#side)">
          <path d="M1263 1130 1318 1512Q1600 1700 1906 1700T2484 1568L2574 1170Z"/>
          <path d="M1318 1512C1340 1720 1620 1925 1920 1925S2436 1770 2484 1568L2400 1300H1400Z"/>
        </g>
        <path class="iso" d="M1296 1349C1350 1580 1640 1763 1935 1763S2480 1580 2522 1391M1519 1470 1533 1656 1547 1825M2509 1331 2467 1518 2426 1688"/>
        <path class="edge" d="M1318 1512C1340 1720 1620 1925 1920 1925S2436 1770 2484 1568"/>
        <ellipse class="edge" cx="1920" cy="1107" rx="659" ry="469" transform="rotate(2 1920 1107)" fill="url(#top)"/>
        <path class="iso" d="M1981 642 1942 886M1280 982 1567 1011M2331 1087 2579 1112M1898 1172 1834 1570"/>

        <!-- pocket and servo -->
        <g class="servo" transform="translate(1360 760) scale(.6633 .3333)">
          <path d="M340 560 1250 655 1468 695 1454 1363 264 1120Z" fill="#4d1b79"/>
          <path d="M332 620H353L357 790 322 1130 264 1120Z" fill="url(#wall)"/>
          <path d="M1468 695 1455 885 1434 1050V1358L1454 1363Z" fill="url(#darkwall)"/>
          <path class="iso" d="M353 668 498 692M431 650V760M1308 668 1290 960M1388 685 1367 965M1296 853 1452 882M332 620 264 1120M352 620 318 1128M310 770 322 1125M330 820 295 1120M1455 885 1434 1355M1460 885 1444 1358M340 620 314 780"/>
          <g class="mesh" fill="url(#metal)">
            <path d="M367 770 500 795V1162L320 1128 327 1075 333 1076 335 1020Z"/>
            <path d="M1268 948 1433 980 1427 1355 1252 1320Z" fill="#808284"/>
            <path d="M500 860 985 740 1250 740 1273 765 1252 1318 470 1156Z"/>
            <path d="M1026 760 1236 808 1218 1256 1003 1214Z" fill="#858788"/>
          </g>
          <path class="wire" d="M1026 760 1218 1256M1236 808 1003 1214M1003 1214 1252 1318M1236 808 1258 745M1218 1256 1252 1318M1026 760 985 950 1003 1214M1258 750 1252 1318M1026 770 1236 800M1020 750 1236 790M1240 808 1228 1270M985 950 1003 1214 1252 1310 1215 1256M367 770 432 1148M367 770 410 1140M367 770 380 1020M470 1150 500 960M470 1150 510 1030M470 1150 530 1080M470 1150 560 1130M490 1158 620 1170M780 1170 1003 1214M720 1195 1003 1214M750 1180 1003 1214M925 1080 1003 1214M945 1070 1003 1214M965 1040 1003 1214M985 1000 1003 1214M865 1080 790 1170M925 1080 760 1180M1268 960 1390 1215M1268 960 1425 1235M1433 985 1425 1235M1268 970 1340 1225"/>
          <path d="M367 780 350 1020 420 1148 435 1148Z" fill="#bebebe" opacity=".55"/>
          <path d="M1268 965 1400 1215 1340 1225Z" fill="#bebebe" opacity=".8"/>
          <path d="M1342 1230 1310 1332 1350 1290 1365 1342 1408 1352 1400 1240Z" fill="#bebebe" opacity=".85"/>
          <path class="wire" d="M335 1020 355 1075M355 1020 335 1075M327 1075 356 1085 340 1130M1405 1240 1425 1295M1425 1240 1405 1295M1404 1298 1427 1300"/>
          <ellipse cx="379" cy="1055" rx="34" ry="46" fill="#bebebe"/><ellipse cx="379" cy="1056" rx="25" ry="36" fill="#c0c0c0" stroke="#7423c4"/>
          <ellipse cx="1376" cy="1255" rx="34" ry="46" fill="#bebebe"/><ellipse cx="1376" cy="1259" rx="25" ry="38" fill="#c0c0c0" stroke="#7423c4"/>
          <path class="iso" d="M473 790 432 1150M1300 840 1284 1325"/>

          <!-- gearbox cylinders -->
          <path d="M497 800C510 1110 620 1200 700 1198 770 1195 830 1150 863 1076L905 1080C950 1075 975 1050 990 990V780L860 840Q780 1020 700 1020 560 1000 497 800Z" fill="url(#drumshade)"/>
          <path d="M497 800C510 1110 620 1200 700 1198 770 1195 830 1150 863 1076L905 1080C950 1075 975 1050 990 990V780L860 840Q780 1020 700 1020 560 1000 497 800Z" fill="url(#ribs)"/>
          <path d="M866 896 898 905 892 1076 862 1072Z" fill="#757677"/><path class="wire" d="M866 896 892 1076M898 905 862 1072"/>
          <path d="M497 680Q490 780 505 840C540 960 620 1022 700 1020 780 1018 835 950 862 896Q880 902 905 900C960 890 990 820 995 745L980 730 560 640Z" fill="#bebebe"/>
          <path d="M565 690H800Q790 800 720 860V968C790 965 830 900 856 842 880 850 900 850 915 848 965 835 980 790 978 745L900 720Z" fill="#8f9192"/>
          <path d="M565 690H800Q790 800 720 860V968C790 965 830 900 856 842 880 850 900 850 915 848 965 835 980 790 978 745L900 720Z" fill="url(#slant)"/>
          <path d="M810 745 850 742 902 848 856 842Z" fill="#8a8b8c"/>
          <path d="M565 700Q570 740 592 770V700Z" fill="#5f6061"/><path d="M520 740Q530 860 600 930" fill="none" stroke="#a9a9a9"/>
          <path d="M583 800 598 950Q612 992 655 993T712 950L722 830Z" fill="#999"/><path d="M583 800 598 950Q612 992 655 993T712 950L722 830Z" fill="url(#ribs)"/>

          <!-- horn, sides first -->
          <path d="M54 390 58 480Q62 525 93 537L592 705 600 640 93 465Z" fill="#6e6f6f"/>
          <path d="M54 390 58 480Q62 525 93 537V465Z" fill="#a8a8a8"/>
          <path class="wire" d="M62 440V500M68 450V515M74 455V525M80 460V530M86 462V533M93 465V537M93 465 592 705M58 480Q62 525 93 537L592 705"/>
          <path d="M738 665H1195Q1252 640 1252 600L1248 680Q1240 750 1195 750L738 738Z" fill="#787979"/>
          <path d="M1195 680Q1250 660 1252 600L1248 680Q1240 750 1195 750Z" fill="#a5a5a5"/>
          <path class="wire" d="M1205 678V748M1213 674V746M1221 668V740M1229 660V730M1237 648V715M1244 635V700M738 738 1195 750Q1240 750 1248 680L1252 600M738 668 1195 748M1195 680V750"/>
          <path d="M768 368 780 290V180L770 170Z" fill="#5d5e5e"/>
          <path d="M600 640 684 420 738 665Z" fill="#8d8f90"/>
          <g class="mesh" fill="url(#metal)">
            <path d="M115 313 632 342 700 400 600 640 93 465C30 430 40 315 115 313Z"/>
            <path d="M765 368 1200 520C1272 540 1265 680 1195 680L738 665 680 500Z"/>
            <path d="M632 342 650 185C655 85 775 85 780 185L765 368 700 420Z"/>
            <path d="M600 640 738 665 722 830C712 950 590 945 583 800Z"/>
          </g>
          <g fill="#bebebe">
            <path d="M115 313C40 315 30 430 93 465L112 430 90 370Z" opacity=".8"/>
            <path d="M1200 520C1272 540 1265 680 1195 680L1190 630 1225 580Z" opacity=".8"/>
            <path d="M85 362 540 435 620 400V560L520 495 90 425Z"/>
            <path d="M760 440 845 505 1215 570V632L840 562 740 600Z"/>
            <path d="M650 185C655 85 775 85 780 185L760 208 722 216V260L742 320 700 318 672 315 700 260 696 214Z"/>
            <path d="M583 815 640 800 650 745 640 690 690 690 670 745 668 800 722 835C712 950 590 945 583 815Z"/>
          </g>
          <path class="wire" d="M115 313 632 342M115 313 310 405M632 342 310 405M632 342 380 415M632 342 450 430M632 342 520 440M632 342 560 420M600 640 93 465M600 640 310 460M600 640 380 470M600 640 450 485M600 640 500 495M600 640 540 500M600 640 570 520M93 465 310 460M93 465 240 445M115 313 200 385M765 368 1200 520M765 368 1000 535M765 368 940 520M765 368 880 510M765 368 1060 545M1200 520 1000 535M1200 520 1110 550M738 665 1195 680M738 665 860 570M738 665 930 580M738 665 1000 590M738 665 1060 605M1195 680 1000 595M1195 680 1110 615M1195 680 1060 610M650 185 720 280M780 185 690 280M632 342 705 280 765 368M632 342 690 200M765 368 720 210M632 342 650 185M765 368 780 210M632 342 765 368M600 640 722 830M738 665 583 815M600 640 640 800M738 665 670 800M600 640 660 690 738 665M600 640 583 815M738 665 722 830M600 640 620 590M600 640 650 615M600 640 680 628 738 665M738 665 700 620M738 665 730 600M600 640 684 626M632 342 620 400M765 368 770 430"/>
          <path d="M697 120H745L718 162Z" fill="#8f9091"/><path d="M620 908 648 864 672 916Z" fill="#8f9091"/>
          <ellipse cx="684" cy="500" rx="92" ry="126" fill="#8b8c8d" stroke="#bebebe"/>
          <ellipse cx="684" cy="500" rx="82" ry="112" fill="none" class="rays wide"/>
          <ellipse cx="682" cy="525" rx="88" ry="100" fill="#a6a7a8" stroke="#bebebe"/>
          <ellipse cx="682" cy="525" rx="68" ry="80" fill="none" class="rays"/>
          <ellipse cx="684" cy="550" rx="47" ry="62" fill="#b5b5b5" stroke="#bebebe"/>
          <path d="M640 545Q650 495 700 500T730 560 690 618Z" fill="#bebebe"/>
          <path d="M680 540V528M686 545V524M692 548V522M698 548V522M704 548V522M710 546V524M716 540V530" stroke="#777"/>
          <use href="#hole" x="105" y="388"/><use href="#hole" x="173" y="402"/><use href="#hole" x="245" y="414"/><use href="#hole" x="313" y="429"/><use href="#hole" x="383" y="442"/><use href="#hole" x="455" y="455"/><use href="#hole" x="525" y="468"/>
          <use href="#hole" x="843" y="530"/><use href="#hole" x="915" y="545"/><use href="#hole" x="988" y="558"/><use href="#hole" x="1060" y="572"/><use href="#hole" x="1132" y="586"/><use href="#hole" x="1206" y="600"/>
          <use href="#hole" x="716" y="188"/><use href="#hole" x="705" y="280"/><use href="#hole" x="662" y="720"/><use href="#hole" x="652" y="826"/>
          <path d="M264 1120 1454 1363 1468 695 1250 655" fill="none" stroke="#7423c4" stroke-width="2.500"/>
        </g>

        <!-- world axes -->
        <path d="M501 1772 491 1822 564 1828" fill="none" stroke="#6c7278" stroke-width="1.500"/>
        <text class="axis" x="571" y="1831">x</text><text class="axis" x="495" y="1770">z</text><text class="axis" x="506" y="1770">y</text>
      </svg>
      <button class="view-title">Perspective<svg viewBox="0 0 30 44"><path d="M3 8V38" stroke="#3b4fa0"/><path d="M12 18H24L18 25Z" fill="#111"/></svg></button>
    </div>
    <nav class="view-tabs">
      <a class="active" href="#"><svg viewBox="0 0 190 52" preserveAspectRatio="none"><path d="M1 0V27L24 51H185L189 47V0"/></svg>Perspective</a>
      <a href="#">Top</a><a href="#">Front</a><a href="#">Right</a>
      <button aria-label="New viewport"><svg viewBox="0 0 22 22"><path d="M8 1H14V8H21V14H14V21H8V14H1V8H8Z" fill="#fff" stroke="#9a9ca2"/></svg></button>
    </nav>
  </section>

  <aside class="panel">
    <h2>Layers</h2>
    <div class="panel-tabs">
      <button aria-label="Properties"><span class="wheel"></span></button>
      <button class="active" aria-label="Layers"><svg viewBox="0 0 40 40"><path d="M2 1 38 7V27L18 39 5 26Z" fill="#f4f4f4" stroke="#111" stroke-width="2"/><path d="M2 1 38 7 17 17Z" fill="#ff8c5a" stroke="#a02000"/><path d="M2 2 17 17 38 8V15L18 25 3 10Z" fill="#e01414"/><path d="M4 18 18 32 38 21V27L18 38 5 26Z" fill="#2b58c8"/></svg></button>
      <button aria-label="Rendering"><svg viewBox="0 0 40 40"><ellipse cx="22" cy="35" rx="16" ry="5" fill="#999"/><circle cx="18" cy="22" r="15" fill="url(#deepball)" stroke="#001"/><use href="#hand" x="13" y="1" width="27" height="13"/></svg></button>
      <button aria-label="Materials"><svg viewBox="0 0 40 40"><path d="M28 4 34 6 36 14 26 28 14 38 4 33 8 26 18 22Z" fill="#eee" stroke="#333" stroke-width="2"/><path d="M25 9 33 16 27 24 18 20Z" fill="#ee5518"/></svg></button>
      <button aria-label="Libraries"><svg viewBox="0 4 58 58"><use href="#folder" width="58" height="58"/></svg></button>
      <button aria-label="Help"><svg viewBox="0 0 40 40"><path d="M3 3H37V37H3Z" fill="#fff" stroke="#333" stroke-width="2"/><path d="M4 4H36V8H4Z" fill="#3a3ab0"/><circle cx="20" cy="23" r="13" fill="#3f62d8"/><text x="13" y="32" font-size="26" font-family="Liberation Serif, serif" font-weight="bold" fill="#fff">?</text></svg></button>
      <button aria-label="Notifications"><svg viewBox="0 0 40 40"><path d="M20 3C10 3 8 10 8 18 8 28 6 32 2 35H38C34 32 32 28 32 18 32 10 30 3 20 3Z" fill="#0a7cff" stroke="#111" stroke-width="2"/><circle cx="20" cy="3" r="2.500"/><path d="M15 36q5 6 10 0z"/></svg></button>
      <button class="dim" aria-label="Panel options"><svg viewBox="0 0 40 40"><use href="#gear"/></svg></button>
    </div>
    <div class="panel-body">
      <div class="panel-tools">
        <button aria-label="New layer"><svg viewBox="0 0 40 40"><use href="#page" x="6" y="2" width="28" height="36"/></svg></button>
        <button aria-label="New sublayer"><svg viewBox="0 0 40 40"><path d="M3 1H17L25 9V28H3ZM14 12H28L36 20V39H14Z" fill="#bbb" stroke="#888" stroke-width="2"/></svg></button>
        <button aria-label="Delete"><svg viewBox="0 0 40 40"><path d="M4 4 36 37M36 4 4 37" stroke="#8e8e8e" stroke-width="6"/><path d="M4 4 36 37M36 4 4 37" stroke="#bbb" stroke-width="3"/></svg></button>
        <button aria-label="Move up"><svg viewBox="0 0 40 40"><path d="M20 10 36 29H4Z" fill="#bbb" stroke="#888" stroke-width="2"/></svg></button>
        <button aria-label="Move down"><svg viewBox="0 0 40 40"><path d="M20 31 36 11H4Z" fill="#bbb" stroke="#888" stroke-width="2"/></svg></button>
        <button aria-label="Move left"><svg viewBox="0 0 40 40"><path d="M9 20 29 3V37Z" fill="#aaa" stroke="#888" stroke-width="2"/></svg></button>
        <button aria-label="Filter"><svg viewBox="0 0 40 40"><path d="M3 5Q17 0 31 5L20 19V36H14V19Z" fill="url(#blue)" stroke="#101c50" stroke-width="2"/><path d="M37 31V40H29Z"/></svg></button>
        <button aria-label="Layer state"><svg viewBox="0 0 40 40"><path d="M4 3H20L28 11V37H4Z" fill="#bbb" stroke="#888" stroke-width="2"/><path d="M9 12H23V32H9ZM16 12V32M9 21H23" fill="none" stroke="#999"/><path d="M36 31V40H28Z" fill="#999"/></svg></button>
        <button aria-label="Tools"><svg viewBox="0 0 40 40"><path d="M5 35 20 15" stroke="#111" stroke-width="8" stroke-linecap="round"/><path d="M5 35 15 22" stroke="#3355b0" stroke-width="4" stroke-linecap="round"/><path d="M10 6Q20 0 27 6L36 16 31 23 24 15 19 19 15 12 20 8Z" fill="#ddd" stroke="#111" stroke-width="2"/><path d="M38 31V40H30Z"/></svg></button>
        <button aria-label="Help"><svg viewBox="0 0 40 40"><circle cx="20" cy="20" r="18" fill="#3350c8"/><text x="11" y="32" font-size="34" font-family="Liberation Serif, serif" font-weight="bold" fill="#fff">?</text></svg></button>
      </div>
      <div class="panel-list">
        <table>
          <thead>
            <tr><th>Layer</th><th>Curre...</th><th></th><th></th><th></th><th>M.</th><th></th><th>P...</th><th></th></tr>
          </thead>
          <tbody>
            <tr><td>3d Models</td><td></td><td><svg class="b"><use href="#bulb"/></svg></td><td><svg class="l"><use href="#lock"/></svg></td><td><i class="swatch silver"></i></td><td><i class="dot"></i></td><td>C.</td><td><svg class="d silver" viewBox="0 0 36 36"><path d="M18 1 35 18 18 35 1 18Z"/></svg></td><td>D.</td></tr>
            <tr><td>Default</td><td></td><td><svg class="b"><use href="#bulb"/></svg></td><td><svg class="l"><use href="#lock"/></svg></td><td><i class="swatch black"></i></td><td><i class="dot"></i></td><td>C.</td><td><svg class="d black" viewBox="0 0 36 36"><path d="M18 1 35 18 18 35 1 18Z"/></svg></td><td>D.</td></tr>
            <tr class="selected"><td>Mounts</td><td><svg class="tick" viewBox="0 0 32 24"><path d="M1 12 11 21 31 2"/></svg></td><td></td><td></td><td><i class="swatch purple"></i></td><td><i class="dot"></i></td><td>C.</td><td><svg class="d purple" viewBox="0 0 36 36"><path d="M18 1 35 18 18 35 1 18Z"/></svg></td><td>D.</td></tr>
            <tr><td>Layer 03</td><td></td><td><svg class="b"><use href="#bulb"/></svg></td><td><svg class="l"><use href="#lock"/></svg></td><td><i class="swatch navy"></i></td><td><i class="dot"></i></td><td>C.</td><td><svg class="d navy" viewBox="0 0 36 36"><path d="M18 1 35 18 18 35 1 18Z"/></svg></td><td>D.</td></tr>
            <tr><td>Layer 04</td><td></td><td><svg class="b"><use href="#bulb"/></svg></td><td><svg class="l"><use href="#lock"/></svg></td><td><i class="swatch green"></i></td><td><i class="dot"></i></td><td>C.</td><td><svg class="d green" viewBox="0 0 36 36"><path d="M18 1 35 18 18 35 1 18Z"/></svg></td><td>D.</td></tr>
            <tr><td>Layer 05</td><td></td><td><svg class="b"><use href="#bulb"/></svg></td><td><svg class="l"><use href="#lock"/></svg></td><td><i class="swatch white"></i></td><td><i class="dot"></i></td><td>C.</td><td><svg class="d white" viewBox="0 0 36 36"><path d="M18 1 35 18 18 35 1 18Z"/></svg></td><td>D.</td></tr>
          </tbody>
        </table>
      </div>
    </div>
  </aside>
</main>

<form class="osnap">
  <label><input type="checkbox">End</label>
  <label><input type="checkbox">Near</label>
  <label><input type="checkbox">Point</label>
  <label><input type="checkbox">Mid</label>
  <label><input type="checkbox">Cen</label>
  <label><input type="checkbox">Int</label>
  <label><input type="checkbox">Perp</label>
  <label><input type="checkbox">Tan</label>
  <label><input type="checkbox">Quad</label>
  <label><input type="checkbox">Knot</label>
  <label><input type="checkbox">Vertex</label>
  <label><input type="checkbox" disabled>Project</label>
  <label><input type="checkbox" disabled>Disable</label>
</form>

<div class="statusbar">
  <button>CPlane</button>
  <span>x 0.524</span>
  <span>y 5.960</span>
  <span>z</span>
  <button>Inches</button>
  <button class="layer"><i></i>Mounts</button>
  <button>Grid Snap</button>
  <button>Ortho</button>
  <button>Planar</button>
  <button>Osnap</button>
  <button class="on">SmartTrack</button>
  <button>Gumball</button>
  <button>Record History</button>
  <button>Filter</button>
</div>

<footer class="taskbar">
  <button class="start" aria-label="Start"><svg viewBox="0 0 40 40"><path d="M0 6 16 4V19H0ZM18 3 40 0V19H18ZM0 21H16V36L0 34ZM18 21H40V40L18 37Z" fill="#fff"/></svg></button>
  <div class="search">
    <svg class="lens" viewBox="0 0 50 50"><circle cx="32" cy="17" r="15" fill="none" stroke="#111" stroke-width="3"/><path d="M21 28 2 47" stroke="#111" stroke-width="3"/></svg>
    <input type="search" aria-label="Search" placeholder="Type here to search">
    <svg class="doodle" viewBox="0 0 190 92">
      <path d="M82 20C84 4 96 0 106 3 126 10 140 9 144 1 147 6 146 12 144 14L153 5C154 16 148 22 146 24L152 22C147 38 134 44 118 36 106 30 96 26 82 20Z" fill="#8a5312"/>
      <path d="M92 8Q120 20 146 14M88 14Q118 28 146 24M96 24Q120 38 142 34" fill="none" stroke="#4a2a05" stroke-width="2"/>
      <path d="M82 20C74 8 64 8 56 16 46 28 34 34 20 24 22 30 18 34 12 31 18 40 24 42 36 43 56 42 70 34 82 20Z" fill="#8a5312"/>
      <path d="M66 10Q54 32 24 32M76 16Q60 38 24 38" fill="none" stroke="#4a2a05" stroke-width="2"/>
      <path d="M93 42C102 32 128 30 142 40 158 50 162 62 184 64 186 72 174 76 168 68 156 66 148 56 138 46 130 58 122 46 116 56 104 52 94 54 93 42Z" fill="#5a78c4"/>
      <path d="M108 36Q104 44 108 50M122 36Q120 46 126 48M138 46Q150 66 172 70" fill="none" stroke="#2a1c70" stroke-width="3"/>
      <path d="M24 58Q60 50 86 56L100 74 90 75 88 82 78 79 72 86 62 82 54 90 44 84 34 90 28 82 18 88 14 82 0 85Q4 66 24 58Z" fill="#a3a6b8"/>
      <path d="M30 58 6 82M38 56 20 84M46 56 34 88M54 56 50 84M62 56 64 82M72 56 78 78M80 56 90 74" stroke="#e6e6f2" stroke-width="3"/>
    </svg>
  </div>
  <nav class="apps">
    <button aria-label="Cortana"><svg viewBox="0 0 60 60"><circle cx="30" cy="30" r="17" fill="none" stroke="#fff" stroke-width="4"/></svg></button>
    <button aria-label="Task view"><svg viewBox="0 0 60 60"><path d="M10 11V18H33V11M10 22H33V39H10ZM10 49V42H33V49M43 11V20M43 31V49" fill="none" stroke="#fff" stroke-width="2.500"/><circle cx="43" cy="26" r="3" fill="#fff"/></svg></button>
    <button aria-label="Edge"><svg viewBox="0 0 60 60"><circle cx="30" cy="30" r="29" fill="#0b67c2"/><path d="M2 26C6 8 20 0 32 1 50 2 60 16 59 28 58 40 44 42 38 38 42 28 34 18 24 16 12 16 4 22 2 26Z" fill="#3fc8d8"/><path d="M32 1C50 2 60 16 59 28 58 40 44 42 38 38 44 30 44 14 32 1Z" fill="#5fdc7a"/><path d="M26 20Q16 34 28 46 42 56 56 44 48 60 30 59 12 56 10 38 12 24 26 20Z" fill="#1558a8"/></svg></button>
    <button aria-label="File Explorer"><svg viewBox="0 0 60 60"><path d="M4 8H22L28 14V24H4Z" fill="#e09a00"/><path d="M4 15H56V50H4Z" fill="#ffd257"/><path d="M12 52V32H48V52H40V40H20V52Z" fill="#3b92dc"/></svg></button>
    <button aria-label="Store"><svg viewBox="0 0 60 60"><path d="M17 14V3H43V14" fill="none" stroke="#2ab4f0" stroke-width="4"/><path d="M2 10H58V50Q56 58 50 58H10Q4 58 2 50Z" fill="#f2f2f2"/><path d="M19 23h10v10H19z" fill="#f25022"/><path d="M31 23h10v10H31z" fill="#7fba00"/><path d="M19 35h10v10H19z" fill="#00a4ef"/><path d="M31 35h10v10H31z" fill="#ffb900"/></svg></button>
    <button aria-label="Mail"><svg viewBox="0 0 60 60"><path d="M1 18 30 1 59 18Z" fill="#0a5cb0"/><path d="M6 19H54V36H6Z" fill="#f2f2f2"/><path d="M1 19 30 38 59 19V57H1Z" fill="#2aa8ea"/><path d="M30 38 59 19V57Z" fill="#45c8f4"/><path d="M1 57 30 38 59 57Z" fill="#1c94e0"/></svg></button>
    <button aria-label="p5"><svg viewBox="0 0 60 60"><circle cx="30" cy="30" r="30" fill="#f8e71c"/><text x="8" y="43" font-size="38" fill="#fff">p5</text></svg></button>
    <button aria-label="Arduino"><svg viewBox="0 0 60 60"><circle cx="30" cy="30" r="27" fill="#12a0a6"/><path d="M30 30C24 20 12 20 12 30S24 40 30 30 48 20 48 30 36 40 30 30Z" fill="none" stroke="#fff" stroke-width="4"/><path d="M17 30h6M37 30h6M40 27v6" stroke="#fff" stroke-width="2"/></svg></button>
    <button aria-label="Chat"><svg viewBox="0 0 60 60"><path d="M0 0h60v60H0z" fill="#00aff0"/><path d="M18 18h24v24H30l-12-6z" fill="#fff"/><path d="M27 21v12M33 21v12M23 25h14M23 30h14" stroke="#00aff0" stroke-width="2"/></svg><b>99+</b></button>
    <button class="open" aria-label="Chrome"><svg viewBox="0 0 60 60"><circle cx="30" cy="30" r="30" fill="#fcc31e"/><path d="M30 30 56 15A30 30 0 0 0 4 15Z" fill="#e33b2e"/><path d="M30 30 4 15A30 30 0 0 0 30 60L44 36Z" fill="#229342"/><circle cx="30" cy="30" r="15" fill="#fff"/><circle cx="30" cy="30" r="12" fill="#2a76f0"/></svg></button>
    <button class="open" aria-label="Discord"><svg viewBox="0 0 60 60"><circle cx="30" cy="30" r="30" fill="#5562ea"/><path d="M18 18Q24 14 26 17H34Q38 14 43 18 48 28 48 39 44 43 39 43L37 39H23L21 43Q16 43 12 39 12 28 18 18Z" fill="#fff"/><circle cx="24" cy="31" r="4" fill="#5562ea"/><circle cx="36" cy="31" r="4" fill="#5562ea"/></svg></button>
    <button class="open focused" aria-label="Rhinoceros 7"><svg viewBox="0 0 60 60"><use href="#rhino"/></svg></button>
  </nav>
  <div class="tray">
    <button aria-label="Get help"><svg class="i46" viewBox="0 0 46 46"><circle cx="21" cy="23" r="19" fill="#0a94dc" stroke="#fff" stroke-width="4"/><text x="12" y="34" font-size="30" font-weight="bold" fill="#fff">?</text><circle cx="36" cy="33" r="9" fill="#f5a81c"/><path d="M36 27v3M36 32v7" stroke="#fff" stroke-width="3"/></svg></button>
    <button class="weather"><i></i>58°F&nbsp; Sunny</button>
    <button class="chev" aria-label="Show hidden icons"><svg viewBox="0 0 32 32"><path d="M1 22 16 7 31 22"/></svg></button>
    <button aria-label="Battery"><svg class="i42" viewBox="0 0 42 32"><path d="M12 5H38V26H12" fill="none" stroke="#fff" stroke-width="2"/><path d="M15 9H35V22H12Z" fill="#fff"/><path d="M39 12h3v7h-3zM1 6h12v6q-2 4-6 4t-6-4z" fill="#fff"/><path d="M4 1V6M10 1V6M7 16V26" stroke="#fff" stroke-width="2"/></svg></button>
    <button aria-label="Network"><svg class="i32" viewBox="0 0 32 32"><path d="M2 31Q3 6 31 3M10 31Q11 14 31 12M18 31Q19 22 31 20" fill="none" stroke="#fff" stroke-width="2"/><circle cx="28" cy="28" r="3" fill="#fff"/></svg></button>
    <button aria-label="Volume"><svg class="i42" viewBox="0 0 42 36"><path d="M2 12H7L15 4V32L7 24H2Z" fill="none" stroke="#fff" stroke-width="2"/><path d="M22 12Q25 18 22 24M28 7Q34 18 28 29M34 2Q43 18 34 34" fill="none" stroke="#fff" stroke-width="2"/></svg></button>
    <button class="clock"><span>1:59 PM</span><span>11/6/2022</span></button>
    <button aria-label="Notifications"><svg class="i40" viewBox="0 0 40 40"><path d="M1 1H39V32H25L20 38 15 32H1Z" fill="none" stroke="#fff" stroke-width="2"/></svg></button>
  </div>
</footer>

</body>
</html>
```
FILE: styles.css
```
* {
  margin: 0;
  padding: 0;
  box-sizing: border-box;
}
body {
  font-family: "Open Sans", "Noto Sans", sans-serif;
  font-size: 28px;
  line-height: 38px;
  color: #2b2b2b;
  background: #ebecf0;
  height: 100vh;
  display: flex;
  flex-direction: column;
  overflow: hidden;
}
button {
  font: inherit;
  color: inherit;
  background: none;
  border: none;
  display: flex;
  align-items: center;
  justify-content: center;
}
a {
  color: inherit;
  text-decoration: none;
}
svg {
  display: block;
  flex: none;
}
.defs {
  position: absolute;
}

/* title, menu */
.titlebar {
  display: flex;
  align-items: center;
  height: 57px;
  padding-left: 2px;
  background: #fff;
  color: #000;
}
.titlebar h1 {
  font-size: 28px;
  font-weight: normal;
  margin-left: 5px;
  flex: 1;
}
.app-icon {
  width: 40px;
  height: 40px;
}
.pull-tab {
  position: absolute;
  top: 0;
  left: 42.2%;
  width: 603px;
  height: 3px;
  background: linear-gradient(90deg, #ddd 240px, #0078d7 240px, #0078d7 360px, #ddd 360px);
}
.window-buttons {
  display: flex;
  padding-right: 3px;
}
.window-buttons button {
  width: 116px;
  height: 54px;
}
.window-buttons svg {
  width: 20px;
  height: 20px;
  fill: none;
  stroke: #000;
  stroke-width: 2;
}
.menubar {
  display: flex;
  gap: 14px;
  height: 51px;
  padding: 5px 8px;
  background: #fff;
  color: #000;
  border-bottom: 5px solid #ebecf0;
}

/* command line */
.command {
  margin-left: 8px;
  padding-left: 8px;
  border-left: 1px solid #c9cfe2;
  color: #000;
}
.history {
  display: flex;
  height: 81px;
  background: #fff;
  border-bottom: 2px solid #bfc7de;
}
.history-text {
  flex: 1;
  line-height: 41px;
}
.scroll {
  width: 43px;
  background: #f0f0f0;
}
.scroll button {
  width: 40px;
  height: 40px;
}
.scroll svg {
  width: 18px;
  height: 16px;
  fill: #606060;
}
.prompt {
  display: flex;
  align-items: center;
  height: 44px;
  background: #fff;
}
.prompt label {
  font-weight: bold;
}
.prompt input {
  flex: 1;
  height: 100%;
  border: none;
  font: inherit;
}
.spin {
  width: 30px;
}
.spin button {
  width: 28px;
  height: 21px;
  background: #e8e8e8;
  border: 1px solid #acacac;
}
.spin svg {
  width: 12px;
  height: 6px;
}

/* workspace */
.workspace {
  flex: 1;
  min-height: 0;
  display: flex;
  padding-top: 7px;
}
.toolbars {
  display: flex;
  width: 399px;
  padding-top: 6px;
}
.tool-tabs {
  width: 56px;
  padding-top: 8px;
  margin-bottom: 14px;
  border-top: 3px double #c9cfe2;
  border-right: 1px solid #bfc7de;
  display: flex;
  flex-direction: column;
}
.tool-tabs button {
  height: 110px;
  flex: none;
}
.tool-tabs .current {
  position: relative;
  margin-left: 2px;
  margin-right: -1px;
}
.tool-tabs .current svg {
  position: relative;
}
.tool-tabs .current .outline {
  position: absolute;
  left: 0;
  bottom: 0;
  width: 54px;
  height: 141px;
}
.tool-tabs .options {
  height: auto;
  flex: 1;
  margin-left: 2px;
  padding-top: 14px;
  color: #9a9ca0;
  border: 1px solid #bfc7de;
  border-width: 1px 0 0 1px;
}
.i24 { width: 24px; height: 24px; }
.i28 { width: 26px; height: 34px; }
.i32 { width: 32px; height: 32px; }
.i34 { width: 34px; height: 34px; }
.i38 { width: 38px; height: 38px; }
.i40 { width: 40px; height: 40px; }
.i42 { width: 42px; height: 36px; }
.i46 { width: 46px; height: 46px; }

.strip {
  width: 74px;
  padding-top: 9px;
  margin-bottom: 14px;
  border-top: 3px double #c9cfe2;
  border-right: 1px solid #d6d8e0;
}
.strip button,
.palette button {
  width: 70px;
  height: 70px;
}
.strip svg,
.palette svg {
  width: 58px;
  height: 58px;
}
.strip hr {
  height: 2px;
  margin: 2px 4px;
  border: none;
  background: linear-gradient(90deg, transparent, #777, transparent);
}
.palette {
  flex: 1;
  margin: 0 6px;
  padding-top: 9px;
  border-top: 3px double #c9cfe2;
  display: grid;
  grid-template-columns: repeat(3, 70px);
  align-content: start;
}

.view {
  flex: 1;
  min-width: 0;
  display: flex;
  flex-direction: column;
}
.viewport {
  flex: 1;
  min-height: 0;
  position: relative;
  background: #9ca3ab;
  border: 1px solid #bfc7de;
}
.scene {
  width: 100%;
  height: 100%;
}
.grid-minor {
  stroke: #929aa0;
  stroke-width: 1.5;
}
.grid-major {
  stroke: #86858c;
  stroke-width: 1.5;
}
.edge {
  stroke: #7423c4;
  stroke-width: 2.5;
}
path.edge {
  fill: none;
}
.iso {
  stroke: #7423c4;
  stroke-width: 1.5;
  fill: none;
}
.servo * {
  vector-effect: non-scaling-stroke;
}
.mesh path {
  stroke: #bebebe;
  stroke-width: 2.5;
}
.wire {
  fill: none;
  stroke: #bebebe;
  stroke-width: 1.5;
}
.rays {
  stroke: #bebebe;
  stroke-width: 22;
  stroke-dasharray: 2 2;
}
.rays.wide {
  stroke-width: 10;
}
.axis {
  font-size: 34px;
  fill: #5d6268;
}
.view-title {
  position: absolute;
  top: 0;
  left: 0;
  height: 45px;
  padding-left: 13px;
  font-weight: 600;
  background: #869ded;
  color: #1c1c28;
}
.view-title svg {
  width: 30px;
  height: 44px;
  margin-left: 10px;
}
.view-tabs {
  display: flex;
  align-items: center;
  height: 64px;
  padding-bottom: 9px;
}
.view-tabs a {
  padding: 8px 21px;
}
.view-tabs .active {
  position: relative;
  margin-right: 6px;
  padding: 8px 10px 8px 28px;
}
.view-tabs .active svg {
  position: absolute;
  left: 0;
  top: 0;
  width: 100%;
  height: 52px;
  fill: none;
  stroke: #bfc7de;
}
.view-tabs button {
  margin-left: 20px;
}
.view-tabs button svg {
  width: 22px;
  height: 22px;
}

/* layers panel */
.panel {
  width: 692px;
  margin-left: 11px;
  margin-right: 2px;
  padding-bottom: 16px;
  display: flex;
  flex-direction: column;
}
.panel h2 {
  display: flex;
  align-items: center;
  gap: 10px;
  height: 48px;
  padding: 6px 0 0 5px;
  font-size: 28px;
  font-weight: normal;
}
.panel h2::after {
  content: "";
  flex: 1;
  border-top: 3px double #c9cfe2;
}
.panel-tabs {
  display: flex;
  height: 55px;
}
.panel-tabs button {
  flex: 0 0 91px;
  padding: 8px 6px 0 0;
  z-index: 1;
}
.panel-tabs button:first-child {
  flex-basis: 88px;
}
.panel-tabs button:last-child {
  flex: 1;
  padding-right: 0;
}
.panel-tabs .active {
  background: #ebecf0;
  border: 1px solid #bfc7de;
  border-bottom: none;
}
.panel-tabs svg,
.panel-tools svg {
  width: 38px;
  height: 38px;
}
.panel-tabs .dim {
  color: #c3cadd;
}
.wheel {
  width: 34px;
  height: 34px;
  border-radius: 50%;
  border: 1px solid #222;
  background: radial-gradient(circle, #ebecf0 9px, transparent 10px), conic-gradient(#ff0080, red, #ff8000, yellow, #4f0, #0f8, cyan, #04f, #80f, #ff0080);
}
.panel-body {
  flex: 1;
  min-height: 0;
  display: flex;
  flex-direction: column;
  margin-top: -1px;
  border: 1px solid #bfc7de;
}
.panel-tools {
  display: flex;
  height: 91px;
  padding: 6px 0 0 14px;
  border-bottom: 2px solid #bfc7de;
}
.panel-tools button {
  width: 55px;
}
.panel-list {
  flex: 1;
  margin-right: 8px;
  background: #fff;
}
.panel table {
  width: 610px;
  table-layout: fixed;
  border-collapse: collapse;
}
.panel th {
  height: 51px;
  padding: 4px 0 0 5px;
  font-weight: normal;
  text-align: left;
  white-space: nowrap;
  overflow: hidden;
  border-right: 1px solid #dcdfe6;
}
.panel th:nth-child(1) { width: 199px; }
.panel th:nth-child(2) { width: 105px; }
.panel th:nth-child(3) { width: 44px; }
.panel th:nth-child(4) { width: 40px; }
.panel th:nth-child(5) { width: 45px; }
.panel th:nth-child(6) { width: 45px; }
.panel th:nth-child(7) { width: 43px; }
.panel th:nth-child(8) { width: 47px; }
.panel th:nth-child(9) { width: 42px; }
.panel td {
  height: 45px;
  padding: 2px 0 0 9px;
  white-space: nowrap;
  border-bottom: 1px solid #ededf0;
}
.panel td:first-child {
  padding-left: 12px;
}
.panel td:nth-child(n+3):nth-child(-n+6),
.panel td:nth-child(8) {
  padding: 0 0 0 6px;
}
.selected td {
  font-weight: bold;
}
.b {
  width: 22px;
  height: 32px;
  margin-left: 5px;
}
.l {
  width: 30px;
  height: 33px;
}
.d {
  width: 36px;
  height: 36px;
  fill: currentColor;
  stroke: #000;
  stroke-width: 2;
}
.tick {
  width: 32px;
  height: 24px;
  margin-left: 27px;
  fill: none;
  stroke: #000;
  stroke-width: 3;
}
.swatch {
  display: block;
  width: 34px;
  height: 34px;
  border: 2px solid #2b2b2b;
  background: currentColor;
}
.dot {
  display: block;
  width: 32px;
  height: 32px;
  border-radius: 50%;
  background: #fafafa;
}
.silver { color: #bebebe; }
.black { color: #000; }
.purple { color: #7b24cc; }
.navy { color: #0000ff; }
.green { color: #007f00; }
.white { color: #fff; }

/* osnap and status */
.osnap {
  display: grid;
  grid-template-columns: 108px 121px 127px 110px 110px 93px 119px 106px 131px 120px 144px 172px 150px;
  align-items: center;
  height: 48px;
  margin-left: 9px;
  padding: 4px 0 0 11px;
  border-left: 3px double #c9cfe2;
}
.osnap label {
  display: flex;
  align-items: center;
  gap: 8px;
}
.osnap input {
  appearance: none;
  width: 32px;
  height: 32px;
  border: 2px solid #2b2b2b;
  background: #fff;
}
.osnap input:disabled {
  border: 1px solid #b4b4b4;
  background: #e1e1e1;
}
.statusbar {
  display: grid;
  grid-template-columns: 113px 208px 208px 208px 208px 408px 152px 101px 104px 110px 169px 134px 219px 88px;
  height: 37px;
  border-top: 2px solid #bfc7de;
  line-height: 38px;
  white-space: nowrap;
}
.statusbar > * {
  border-right: 1px solid #bfc7de;
  text-align: center;
}
.statusbar .layer {
  justify-content: flex-start;
  gap: 6px;
  padding-left: 6px;
}
.statusbar .layer i {
  width: 25px;
  height: 25px;
  border: 2px solid #2b2b2b;
  background: #7b24cc;
}
.statusbar .on {
  font-weight: bold;
  background: #d0d8ee;
}

/* windows taskbar */
.taskbar {
  display: flex;
  height: 100px;
  background: linear-gradient(90deg, #213740, #20333f 60%, #1b2a3f 72%, #1a2640);
  color: #fff;
}
.start {
  width: 120px;
}
.start svg {
  width: 40px;
  height: 40px;
}
.search {
  display: flex;
  align-items: center;
  width: 860px;
  padding-left: 29px;
  background: #f2f2f2;
  border: 3px solid #c2c2c2;
}
.lens {
  width: 50px;
  height: 50px;
}
.search input {
  flex: 1;
  min-width: 0;
  margin-left: 30px;
  padding-top: 2px;
  border: none;
  background: none;
  font: inherit;
  font-size: 35px;
}
.search input::placeholder {
  color: #2b2b2b;
}
.doodle {
  width: 190px;
  height: 92px;
}
.apps {
  display: flex;
  gap: 4px;
}
.apps button {
  width: 120px;
  position: relative;
}
.apps svg {
  width: 60px;
  height: 60px;
}
.apps .open {
  border-bottom: 5px solid #76b9ed;
  border-top: 5px solid transparent;
  width: 102px;
  margin: 0 9px;
}
.apps .focused {
  width: 120px;
  margin: 0;
  background: #4b5864;
  background-clip: padding-box;
  border-top: 0;
  padding-top: 5px;
}
.apps b {
  position: absolute;
  left: 50px;
  top: 48px;
  width: 70px;
  height: 42px;
  border: 1px solid #aaa;
  border-radius: 21px;
  background: #2c3338;
  font-size: 28px;
  font-weight: 600;
  line-height: 40px;
}
.tray {
  display: flex;
  align-items: center;
  margin-left: auto;
  margin-right: 11px;
  padding-right: 50px;
  border-right: 1px solid #7a8190;
  gap: 24px;
}
.tray .weather {
  gap: 26px;
  margin-left: 22px;
  font-size: 34px;
}
.weather i {
  width: 50px;
  height: 50px;
  border-radius: 50%;
  background: linear-gradient(150deg, #f0b62c 15%, #f07a14 75%);
}
.chev {
  margin-left: 38px;
}
.chev svg {
  width: 32px;
  height: 32px;
  fill: none;
  stroke: #fff;
  stroke-width: 2;
}
.clock {
  flex-direction: column;
  line-height: 46px;
  margin-right: 22px;
}
```
